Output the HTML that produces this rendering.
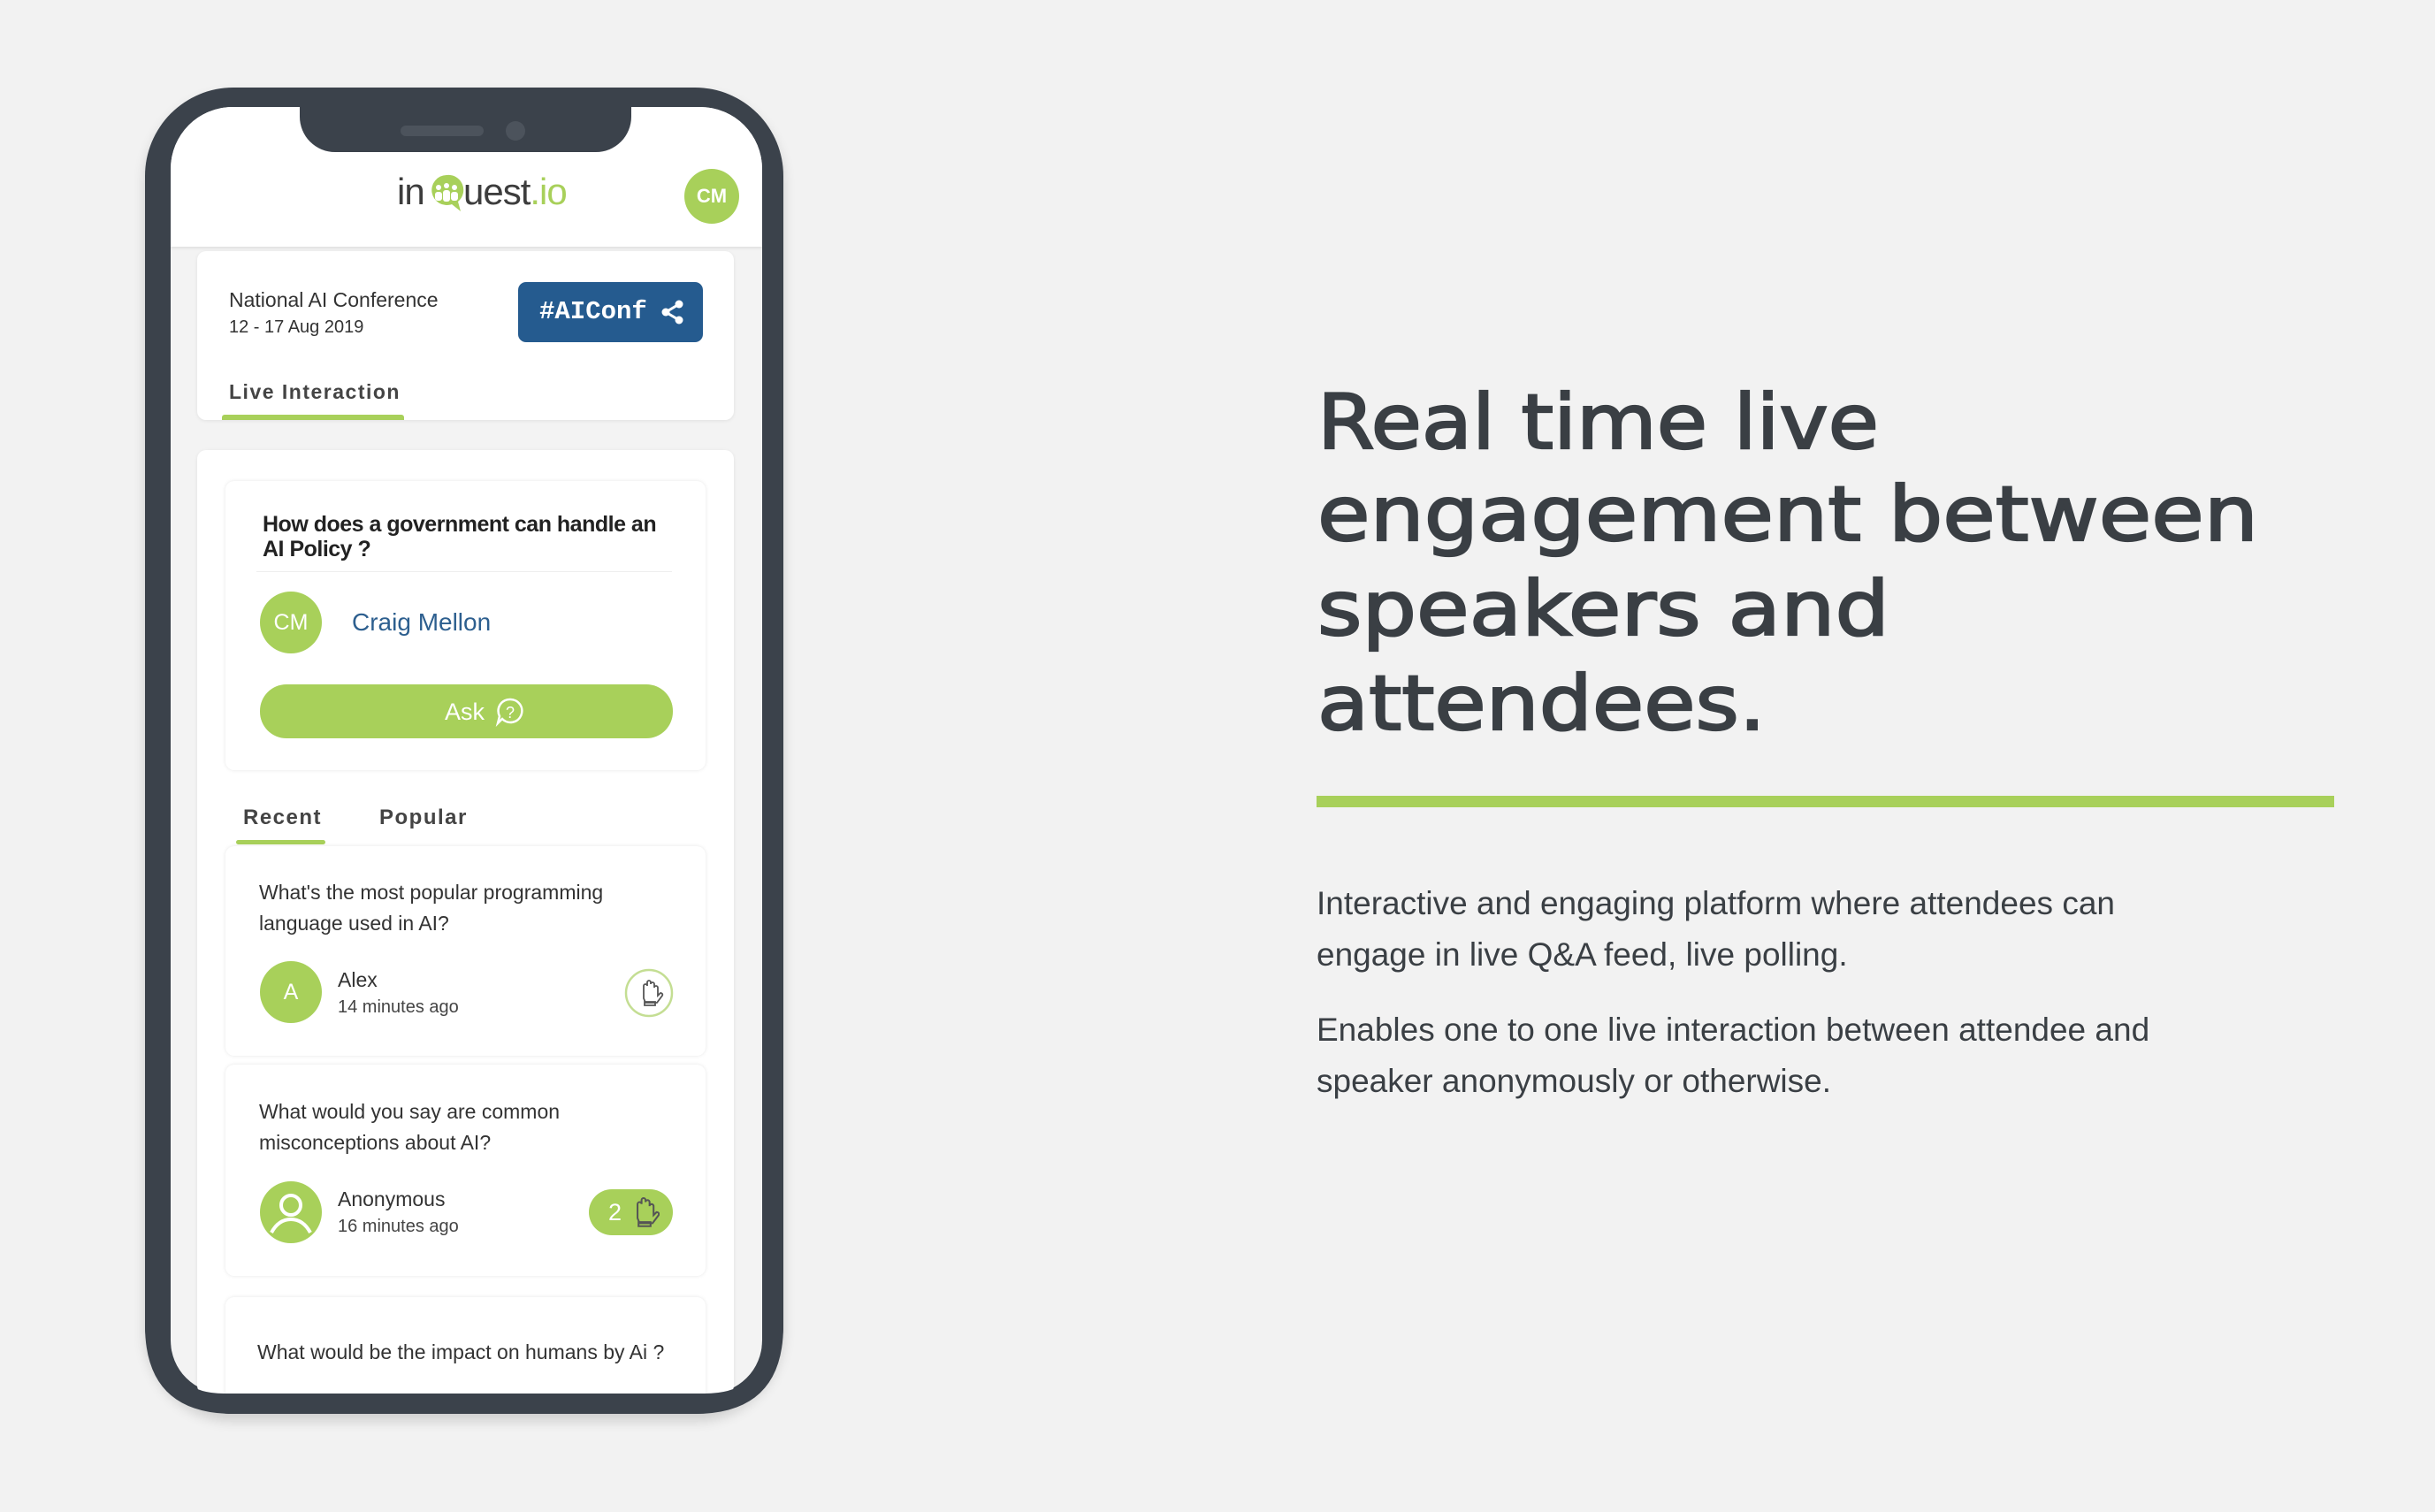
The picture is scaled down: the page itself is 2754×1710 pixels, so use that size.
<!DOCTYPE html>
<html><head><meta charset="utf-8"><style>
*{margin:0;padding:0;box-sizing:border-box}
body{width:2754px;height:1710px;background:#f2f2f2;position:relative;overflow:hidden;font-family:"Liberation Sans",sans-serif;color:#333}
.a{position:absolute}
.phone{left:164px;top:99px;width:722px;height:1500px;background:#3b424b;border-radius:100px;box-shadow:0 8px 14px rgba(0,0,0,.15)}
.screen{left:193px;top:121px;width:669px;height:1455px;background:#f3f3f3;border-radius:70px 70px 60px 60px;overflow:hidden}
.card{background:#fff;border-radius:10px;box-shadow:0 1px 4px rgba(0,0,0,.08)}
.av{border-radius:50%;background:#a8d05a;color:#fff;display:flex;align-items:center;justify-content:center}
.t{white-space:nowrap}
</style></head><body>
<div class="a phone"></div>
<div class="a screen">
  <div class="a" style="left:0;top:0;width:669px;height:158px;background:#fff;box-shadow:0 2px 3px rgba(0,0,0,.08)"></div>
</div>
<!-- notch -->
<div class="a" style="left:339px;top:110px;width:375px;height:62px;background:#3b424b;border-radius:0 0 40px 40px"></div>
<div class="a" style="left:453px;top:142px;width:94px;height:12px;background:#4c535c;border-radius:6px"></div>
<div class="a" style="left:572px;top:137px;width:22px;height:22px;background:#4c535c;border-radius:50%"></div>
<!-- logo -->
<div class="a t" style="left:449px;top:192px;font-size:42px;color:#3d3d3d;line-height:50px;letter-spacing:-1px">in</div>
<svg class="a" style="left:485px;top:196px" width="40" height="46" viewBox="0 0 40 46">
<path d="M20 2a17 17 0 1 0 6 33l10 8-3-11A17 17 0 0 0 20 2z" fill="#a8d05a"/>
<g fill="#fff"><circle cx="11" cy="16" r="3"/><circle cx="20" cy="14" r="3"/><circle cx="29" cy="16" r="3"/><rect x="7" y="21" width="8" height="10" rx="3"/><rect x="16" y="19" width="8" height="13" rx="3"/><rect x="25" y="21" width="8" height="10" rx="3"/></g></svg>
<div class="a t" style="left:524px;top:192px;font-size:42px;color:#3d3d3d;line-height:50px;letter-spacing:-1px">uest<span style="color:#a8d05a">.io</span></div>
<div class="a av" style="left:774px;top:191px;width:62px;height:62px;font-size:22px;font-weight:bold">CM</div>
<!-- card1 -->
<div class="a card" style="left:223px;top:284px;width:607px;height:191px"></div>
<div class="a t" style="left:259px;top:326px;font-size:23px;color:#333">National AI Conference</div>
<div class="a t" style="left:259px;top:359px;font-size:20px;color:#333">12 - 17 Aug 2019</div>
<div class="a" style="left:586px;top:319px;width:209px;height:68px;background:#255b8f;border-radius:9px"></div>
<div class="a t" style="left:610px;top:336px;font-family:'Liberation Mono',monospace;font-size:29px;color:#fff;font-weight:bold">#AIConf</div>
<svg class="a" style="left:746px;top:338px" width="30" height="30" viewBox="0 0 30 30"><g fill="#fff"><circle cx="22" cy="6" r="4.5"/><circle cx="7" cy="15" r="4.5"/><circle cx="22" cy="24" r="4.5"/></g><path d="M22 6L7 15l15 9" stroke="#fff" stroke-width="3" fill="none"/></svg>
<div class="a t" style="left:259px;top:430px;font-size:23px;font-weight:bold;letter-spacing:1.5px;color:#444">Live Interaction</div>
<div class="a" style="left:251px;top:469px;width:206px;height:6px;background:#a8d05a;border-radius:3px 3px 0 0"></div>
<!-- card2 -->
<div class="a card" style="left:223px;top:509px;width:607px;height:1068px"></div>
<div class="a card" style="left:255px;top:544px;width:543px;height:327px;box-shadow:0 0 4px rgba(0,0,0,.1)"></div>
<div class="a" style="left:297px;top:579px;font-size:25px;font-weight:bold;line-height:28px;color:#222;letter-spacing:-.5px">How does a government can handle an<br>AI Policy ?</div>
<div class="a" style="left:290px;top:646px;width:470px;height:1px;background:#eee"></div>
<div class="a av" style="left:294px;top:669px;width:70px;height:70px;font-size:25px">CM</div>
<div class="a t" style="left:398px;top:688px;font-size:28px;color:#2d5f8f">Craig Mellon</div>
<div class="a" style="left:294px;top:774px;width:467px;height:61px;background:#a8d05a;border-radius:30px"></div>
<div class="a t" style="left:503px;top:790px;font-size:27px;color:#fff">Ask</div>
<svg class="a" style="left:560px;top:788px" width="34" height="34" viewBox="0 0 34 34"><path d="M17 3a13 13 0 1 1-9 22l-5 5 2-8A13 13 0 0 1 17 3z" fill="none" stroke="#fff" stroke-width="2.5"/><text x="17" y="24" font-size="18" fill="#fff" text-anchor="middle" font-family="Liberation Sans">?</text></svg>
<!-- tabs -->
<div class="a t" style="left:275px;top:911px;font-size:24px;font-weight:bold;letter-spacing:1.5px;color:#444">Recent</div>
<div class="a t" style="left:429px;top:911px;font-size:24px;font-weight:bold;letter-spacing:1.5px;color:#444">Popular</div>
<div class="a" style="left:267px;top:950px;width:101px;height:5px;background:#a8d05a;border-radius:3px"></div>
<!-- card A -->
<div class="a card" style="left:255px;top:957px;width:543px;height:237px;box-shadow:0 0 4px rgba(0,0,0,.1)"></div>
<div class="a" style="left:293px;top:992px;font-size:23px;line-height:35px;color:#333">What's the most popular programming<br>language used in AI?</div>
<div class="a av" style="left:294px;top:1087px;width:70px;height:70px;font-size:25px">A</div>
<div class="a t" style="left:382px;top:1095px;font-size:23px;color:#333">Alex</div>
<div class="a t" style="left:382px;top:1128px;font-size:20px;color:#444">14 minutes ago</div>
<svg class="a" style="left:706px;top:1095px" width="56" height="56" viewBox="0 0 56 56"><circle cx="28" cy="28" r="26" fill="none" stroke="#c4de93" stroke-width="2.5"/><path d="M22 34V20a2 2 0 0 1 4 0v-4a2 2 0 0 1 4 0v2a2 2 0 0 1 4 0v4a2 2 0 0 1 4 0v9l3-3a2 2 0 0 1 2 3l-6 8H24z M23 38h12v4H23z" fill="none" stroke="#555" stroke-width="1.8"/></svg>
<!-- card B -->
<div class="a card" style="left:255px;top:1204px;width:543px;height:239px;box-shadow:0 0 4px rgba(0,0,0,.1)"></div>
<div class="a" style="left:293px;top:1240px;font-size:23px;line-height:35px;color:#333">What would you say are common<br>misconceptions about AI?</div>
<svg class="a" style="left:294px;top:1336px" width="70" height="70" viewBox="0 0 70 70"><circle cx="35" cy="35" r="35" fill="#a8d05a"/><circle cx="35" cy="27" r="11" fill="none" stroke="#fff" stroke-width="4"/><path d="M13 58c6-11 14-15 22-15s16 4 22 15" fill="none" stroke="#fff" stroke-width="4"/></svg>
<div class="a t" style="left:382px;top:1343px;font-size:23px;color:#333">Anonymous</div>
<div class="a t" style="left:382px;top:1376px;font-size:20px;color:#444">16 minutes ago</div>
<div class="a" style="left:666px;top:1345px;width:95px;height:52px;background:#a8d05a;border-radius:26px"></div>
<div class="a t" style="left:688px;top:1356px;font-size:27px;color:#fff">2</div>
<svg class="a" style="left:712px;top:1352px" width="34" height="40" viewBox="14 12 30 34"><path d="M22 34V20a2 2 0 0 1 4 0v-4a2 2 0 0 1 4 0v2a2 2 0 0 1 4 0v4a2 2 0 0 1 4 0v9l3-3a2 2 0 0 1 2 3l-6 8H24z M23 38h12v4H23z" fill="none" stroke="#555" stroke-width="1.8"/></svg>
<!-- card C -->
<div class="a card" style="left:255px;top:1467px;width:543px;height:120px;box-shadow:0 0 4px rgba(0,0,0,.1)"></div>
<div class="a t" style="left:291px;top:1516px;font-size:23px;color:#333">What would be the impact on humans by Ai ?</div>
<!-- re-mask bottom of screen -->
<svg class="a" style="left:164px;top:1400px" width="722" height="199" viewBox="0 0 722 199"><path d="M0 0H29V116Q29 176 89 176H633Q698 176 698 116V0H722V99Q722 199 622 199H100Q0 199 0 99Z" fill="#3b424b"/></svg>
<!-- right side -->
<svg class="a" style="left:1480px;top:420px" width="1200" height="440"><g font-family="'DejaVu Sans',sans-serif" font-size="86" fill="#3a3f44" stroke="#3a3f44" stroke-width="2.2">
<text x="10" y="87" textLength="635" lengthAdjust="spacingAndGlyphs">Real time live</text>
<text x="10" y="191" textLength="1064" lengthAdjust="spacingAndGlyphs">engagement between</text>
<text x="10" y="298" textLength="647" lengthAdjust="spacingAndGlyphs">speakers and</text>
<text x="10" y="405" textLength="507" lengthAdjust="spacingAndGlyphs">attendees.</text></g></svg>
<div class="a" style="left:1489px;top:900px;width:1151px;height:13px;background:#a8d05a"></div>
<div class="a" style="left:1489px;top:993px;font-size:37px;line-height:58px;color:#3a3f44;width:1200px">Interactive and engaging platform where attendees can<br>engage in live Q&amp;A feed, live polling.</div>
<div class="a" style="left:1489px;top:1136px;font-size:37px;line-height:58px;color:#3a3f44;width:1200px">Enables one to one live interaction between attendee and<br>speaker anonymously or otherwise.</div>
</body></html>
